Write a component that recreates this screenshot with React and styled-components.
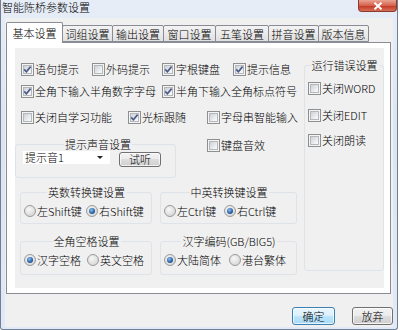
import styled, { createGlobalStyle } from 'styled-components';

const GlobalStyle = createGlobalStyle`
  html, body { margin: 0; padding: 0; background: #fff; }
  body {
    width: 400px; height: 330px; overflow: hidden;
    font-family: "Noto Sans CJK SC", "Liberation Sans", sans-serif;
    font-size: 11px; font-weight: 300; color: #000;
  }
`;

const Window = styled.div`
  width: 398px;
  height: 330px;
  box-sizing: border-box;
  display: flex;
  flex-direction: column;
  padding: 0 4px 2px 4px;
  border: 1px solid #6f7f96;
  border-top: none;
  border-radius: 0 0 3px 3px;
  background: linear-gradient(#e6edf7, #dbe5f2 40%, #e0e9f5);
`;

const TitleBar = styled.div`
  height: 18px;
  margin: 0 -4px;
  padding-left: 1px;
  display: flex;
  align-items: flex-start;
`;

const Title = styled.div`
  line-height: 14px;
  font-size: 11px;
  color: #000;
`;

const CloseBtn = styled.div`
  margin-left: auto;
  width: 39px;
  height: 12px;
  box-sizing: border-box;
  border: 1px solid #8c3a2e;
  border-top: none;
  border-radius: 0 0 4px 4px;
  background: linear-gradient(#e9a393, #d6624c 50%, #c13b26 55%, #d8705a);
  display: flex;
  align-items: center;
  justify-content: center;
`;

const Client = styled.div`
  flex: 1;
  display: flex;
  flex-direction: column;
  padding: 4px 2px 2px 1px;
  background: #f0f0f0;
`;

const TabStrip = styled.div`
  display: flex;
  align-items: flex-end;
  height: 20px;
  position: relative;
  z-index: 1;
`;

const Tab = styled.div`
  width: ${p => p.w}px;
  height: ${p => (p.active ? 21 : 17)}px;
  margin-bottom: ${p => (p.active ? -1 : 0)}px;
  margin-left: ${p => (p.first ? 0 : -1)}px;
  box-sizing: border-box;
  border: 1px solid #898c95;
  border-bottom: ${p => (p.active ? 'none' : '1px solid #898c95')};
  border-radius: 2px 2px 0 0;
  background: ${p => (p.active ? '#fff' : 'linear-gradient(#f3f3f3, #ebebeb 50%, #e0e0e0)')};
  display: flex;
  align-items: center;
  justify-content: center;
  padding-bottom: ${p => (p.active ? 1 : 0)}px;
  position: relative;
  z-index: ${p => (p.active ? 2 : 1)};
  white-space: nowrap;
`;

const Panel = styled.div`
  height: 252px;
  box-sizing: border-box;
  border: 1px solid #898c95;
  background: #fff;
  padding: 5px 6px 5px 8px;
`;

const Content = styled.div`
  height: 240px;
  background: #f0f0f0;
  display: flex;
`;

const LeftCol = styled.div`
  width: 289px;
  padding-top: 13px;
  display: flex;
  flex-direction: column;
`;

const CheckRow = styled.div`
  display: flex;
  align-items: center;
  height: 16px;
  padding-left: ${p => p.pad ?? 6}px;
  margin-top: ${p => p.gap || 0}px;
`;

const Item = styled.label`
  display: flex;
  align-items: center;
  gap: ${p => p.gap ?? 1}px;
  width: ${p => (p.w ? `${p.w}px` : 'auto')};
  height: 16px;
  white-space: nowrap;
  flex: none;
`;

const Box = styled.span`
  position: relative;
  width: 13px;
  height: 13px;
  box-sizing: border-box;
  border: 1px solid #8e8f8f;
  background: #f4f4f4;
  flex: none;
  &::before {
    content: '';
    position: absolute;
    left: 1px; top: 1px;
    width: 9px; height: 9px;
    box-sizing: border-box;
    border: 1px solid #b4b8bd;
    background: linear-gradient(135deg, #cdd1d6, #eef0f2 70%, #fafafa);
  }
  svg { position: absolute; left: 0; top: 0; }
`;

const Round = styled.span`
  position: relative;
  width: 12px;
  height: 12px;
  box-sizing: border-box;
  border-radius: 50%;
  border: 1px solid #9a9a9a;
  background: radial-gradient(circle at 40% 35%, #f8f8f8, #d8d8d8 75%);
  flex: none;
  &::after {
    content: '';
    display: ${p => (p.on ? 'block' : 'none')};
    position: absolute;
    left: 2px; top: 2px;
    width: 6px; height: 6px;
    border-radius: 50%;
    background: radial-gradient(circle at 40% 35%, #8fc2f0, #2a64a8 55%, #163f74);
  }
`;

const SoundRow = styled.div`
  display: flex;
  align-items: flex-start;
  margin-top: 12px;
`;

const Group = styled.fieldset`
  margin: 0;
  width: ${p => p.w}px;
  box-sizing: border-box;
  min-width: 0;
  border: 1px solid #dde3e8;
  border-radius: 3px;
  padding: 0 ${p => p.pr ?? 2}px ${p => p.pb ?? 4}px ${p => p.pl ?? 3}px;
  flex: none;
  legend {
    margin: 0 auto;
    padding: 0 1px;
    line-height: 14px;
    font-size: 11px;
    white-space: nowrap;
  }
`;

const SideGroup = styled(Group)`
  margin-top: 10px;
  height: 213px;
  align-self: flex-start;
`;

const ControlRow = styled.div`
  display: flex;
  align-items: flex-start;
  height: 16px;
  margin-top: ${p => p.gap || 0}px;
`;

const Combo = styled.div`
  width: 87px;
  height: 13px;
  background: #fff;
  display: flex;
  align-items: center;
  padding-left: 2px;
  box-sizing: border-box;
  line-height: 13px;
  &::after {
    content: '';
    margin-left: auto;
    margin-right: 7px;
    border-left: 3px solid transparent;
    border-right: 3px solid transparent;
    border-top: 3px solid #222;
  }
`;

const Button = styled.button`
  width: ${p => p.w}px;
  height: ${p => p.h}px;
  margin: ${p => p.m || 0};
  padding: 0;
  box-sizing: border-box;
  font-family: inherit;
  font-size: 11px;
  font-weight: 300;
  color: #000;
  border: 1px solid ${p => (p.primary ? '#3c7fb1' : '#707070')};
  border-radius: 3px;
  background: ${p => (p.primary
    ? 'linear-gradient(#eaf6fd, #d9f0fc 50%, #bee6fd 50%, #a7d9f5)'
    : 'linear-gradient(#f2f2f2, #ebebeb 50%, #dddddd 50%, #cfcfcf)')};
  box-shadow: inset 0 0 0 1px rgba(255,255,255,0.7);
  display: flex;
  align-items: center;
  justify-content: center;
  line-height: 1;
`;

const GroupRow = styled.div`
  display: flex;
  gap: 8px;
  padding-left: 5px;
  margin-top: ${p => p.gap}px;
`;

const Footer = styled.div`
  display: flex;
  justify-content: flex-end;
  gap: 17px;
  margin: 13px -2px 0 0;
`;

function Check({ label, on, w, gap }) {
  return (
    <Item w={w} gap={gap}>
      <Box>
        {on && (
          <svg width="11" height="11" viewBox="0 0 11 11">
            <path d="M2.2 5.4 L4.4 7.8 L8.6 2.6" stroke="#4a5d88" strokeWidth="1.7" fill="none" />
          </svg>
        )}
      </Box>
      <span>{label}</span>
    </Item>
  );
}

function Radio({ label, on, w }) {
  return (
    <Item w={w} gap={1}>
      <Round on={on} />
      <span>{label}</span>
    </Item>
  );
}

const tabs = [
  ['基本设置', 57],
  ['词组设置', 51],
  ['输出设置', 52],
  ['窗口设置', 53],
  ['五笔设置', 54],
  ['拼音设置', 51],
  ['版本信息', 51],
];

export default function App() {
  return (
    <>
      <GlobalStyle />
      <Window>
        <TitleBar>
          <Title>智能陈桥参数设置</Title>
          <CloseBtn>
            <svg width="10" height="8" viewBox="0 0 10 8">
              <path d="M1.5 0.8 L8.5 7.2 M8.5 0.8 L1.5 7.2" stroke="#fff" strokeWidth="2" />
            </svg>
          </CloseBtn>
        </TitleBar>
        <Client>
          <TabStrip>
            {tabs.map(([t, w], i) => (
              <Tab key={t} w={w} first={i === 0} active={i === 0}>{t}</Tab>
            ))}
          </TabStrip>
          <Panel>
            <Content>
              <LeftCol>
                <CheckRow>
                  <Check label="语句提示" on w={71} />
                  <Check label="外码提示" w={70} />
                  <Check label="字根键盘" on w={71} />
                  <Check label="提示信息" on />
                </CheckRow>
                <CheckRow gap={6}>
                  <Check label="全角下输入半角数字字母" on w={141} />
                  <Check label="半角下输入全角标点符号" on />
                </CheckRow>
                <CheckRow gap={10}>
                  <Check label="关闭自学习功能" w={107} />
                  <Check label="光标跟随" on w={79} />
                  <Check label="字母串智能输入" />
                </CheckRow>
                <SoundRow>
                  <Group w={161} pl={7} pb={10}>
                    <legend>提示声音设置</legend>
                    <ControlRow>
                      <Combo>提示音1</Combo>
                      <Button w={42} h={15} m="1px 0 0 9px">试听</Button>
                    </ControlRow>
                  </Group>
                  <CheckRow pad={31}>
                    <Check label="键盘音效" />
                  </CheckRow>
                </SoundRow>
                <GroupRow gap={7}>
                  <Group w={132} pl={3}>
                    <legend>英数转换键设置</legend>
                    <CheckRow pad={0} gap={4}>
                      <Radio label="左Shift键" w={62} />
                      <Radio label="右Shift键" on />
                    </CheckRow>
                  </Group>
                  <Group w={137} pl={3}>
                    <legend>中英转换键设置</legend>
                    <CheckRow pad={0} gap={4}>
                      <Radio label="左Ctrl键" w={60} />
                      <Radio label="右Ctrl键" on />
                    </CheckRow>
                  </Group>
                </GroupRow>
                <GroupRow gap={10}>
                  <Group w={132} pl={3} pb={6}>
                    <legend>全角空格设置</legend>
                    <CheckRow pad={0} gap={4}>
                      <Radio label="汉字空格" on w={63} />
                      <Radio label="英文空格" />
                    </CheckRow>
                  </Group>
                  <Group w={137} pl={3} pb={6}>
                    <legend>汉字编码(GB/BIG5)</legend>
                    <CheckRow pad={0} gap={4}>
                      <Radio label="大陆简体" on w={65} />
                      <Radio label="港台繁体" />
                    </CheckRow>
                  </Group>
                </GroupRow>
              </LeftCol>
              <SideGroup w={80}>
                <legend>运行错误设置</legend>
                <CheckRow pad={0} gap={8}>
                  <Check label="关闭WORD" />
                </CheckRow>
                <CheckRow pad={0} gap={11}>
                  <Check label="关闭EDIT" />
                </CheckRow>
                <CheckRow pad={0} gap={9}>
                  <Check label="关闭朗读" />
                </CheckRow>
              </SideGroup>
            </Content>
          </Panel>
          <Footer>
            <Button primary w={43} h={18}>确定</Button>
            <Button w={41} h={18}>放弃</Button>
          </Footer>
        </Client>
      </Window>
    </>
  );
}
